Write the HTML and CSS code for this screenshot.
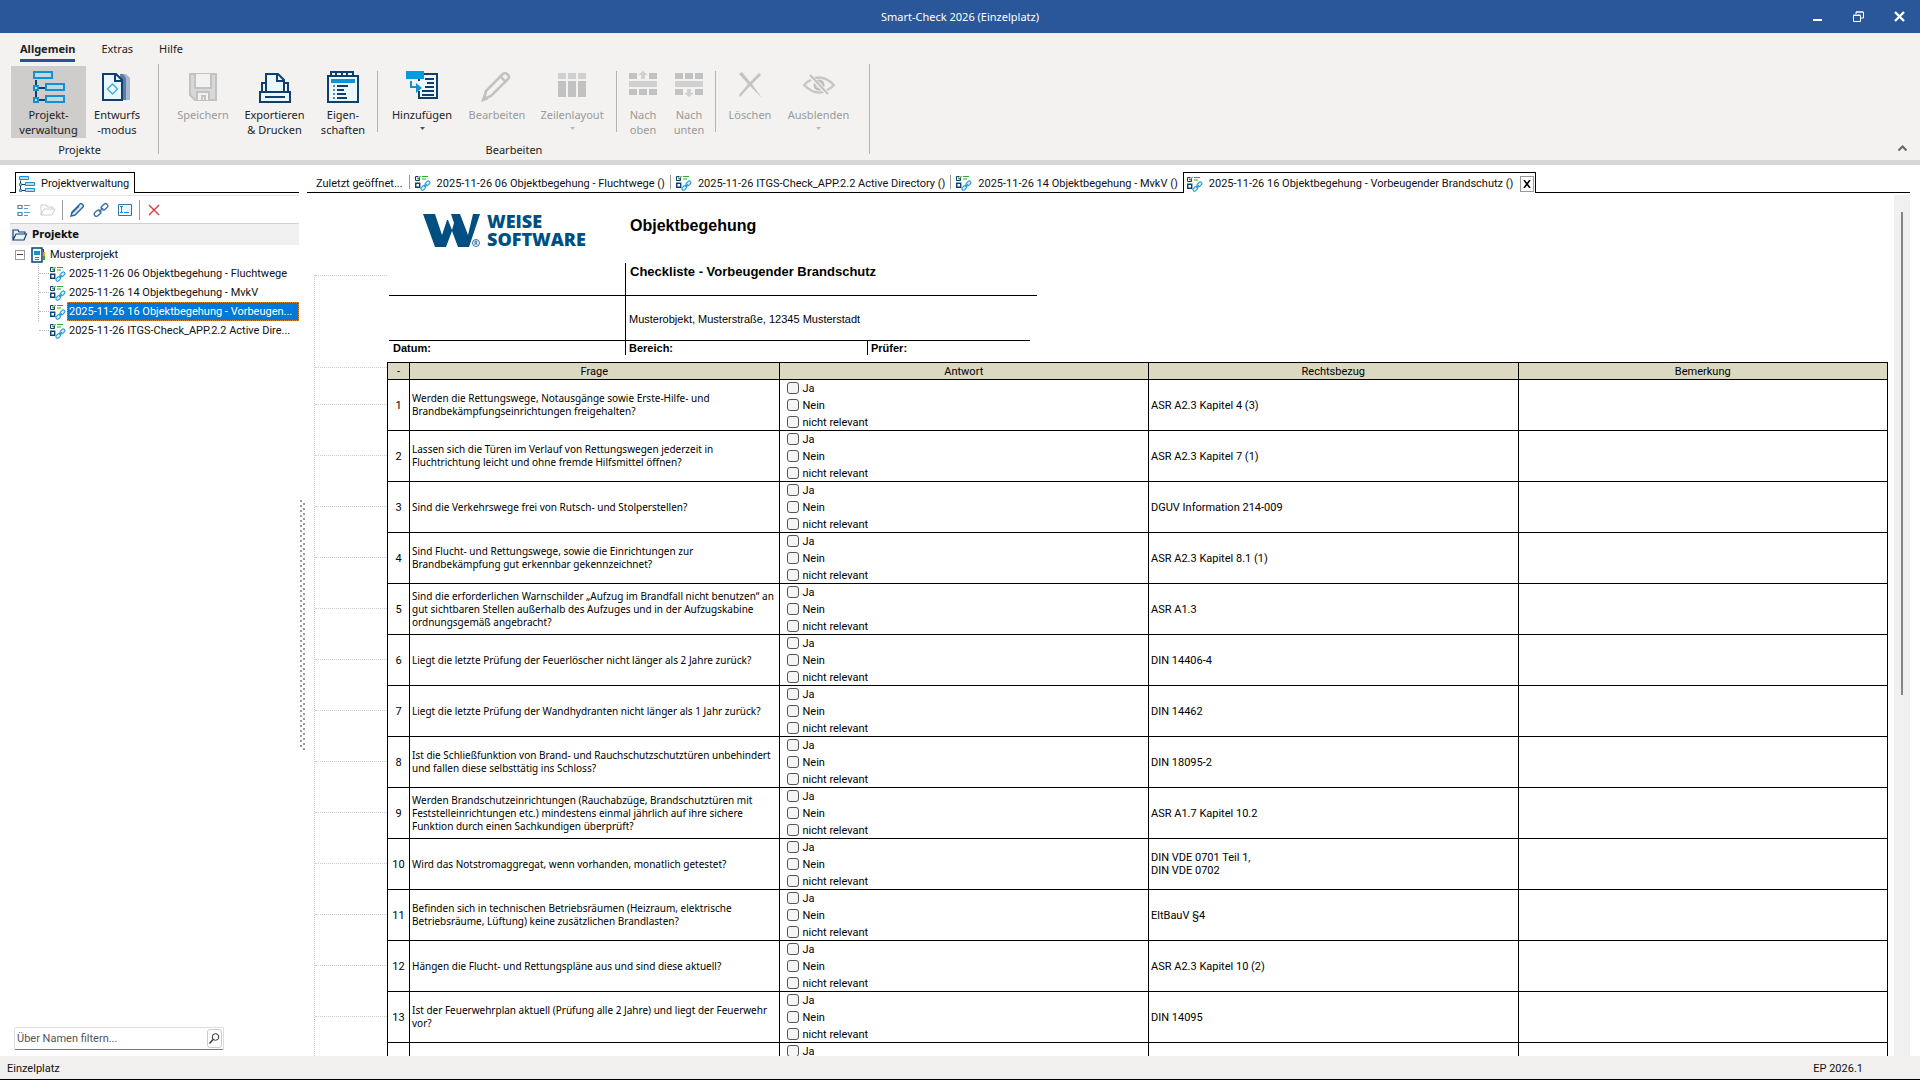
FILE: index.html
```html
<!DOCTYPE html>
<html lang="de">
<head>
<meta charset="utf-8">
<title>Smart-Check 2026 (Einzelplatz)</title>
<link rel="stylesheet" href="styles.css">
</head>
<body>
<svg class="defs" aria-hidden="true">
  <symbol id="i-structure" viewBox="0 0 32 32"><path d="M3 9v17M5 17h7M5 29h7" fill="none" stroke="#0f3f6e" stroke-width="2"/><g fill="#c0d8e4" stroke="#1492cf" stroke-width="2"><path d="M1 1h18v6H1zM13 13h18v6H13zM13 25h18v6H13zM1 15h4v4H1zM1 27h4v4H1z"/></g></symbol>
  <symbol id="i-checklist" viewBox="0 0 16 16"><path d="M3.500 1.500h-3v4h4V3" fill="none" stroke="#0f3f6e"/><path d="M2 2.500l1.200 1.500L5.500 1" fill="none" stroke="#2faa2f" stroke-width="1.200"/><path d="M7 1.500h6M7 4h4" stroke="#2faa2f" stroke-width="1.200"/><path d="M.7 8.200h4v4h-4z" fill="#fff" stroke="#0f3f6e" stroke-width="1.400"/><g fill="#d8effa" stroke="#2a9bd4" stroke-width="1.100"><rect x="9.800" y="6.800" width="5.400" height="3.200" rx="1.500" transform="rotate(-45 12.500 8.400)"/><rect x="5.600" y="11.200" width="5.400" height="3.200" rx="1.500" transform="rotate(-45 8.300 12.800)"/><path d="M9.200 12l2.600-2.800"/></g></symbol>
</svg>

<header class="titlebar">
  <h1 class="titlebar-text">Smart-Check 2026 (Einzelplatz)</h1>
  <div class="window-buttons">
    <button class="window-button" aria-label="Minimieren"><svg width="11" height="11"><path d="M1 8h9v2H1z" fill="#fff"/></svg></button>
    <button class="window-button" aria-label="Wiederherstellen"><svg width="11" height="11"><path d="M.5 4.500h7v6h-7zM3 3V1h7.500v6H8M.5 4h7M3 1h7" fill="none" stroke="#fff"/></svg></button>
    <button class="window-button" aria-label="Schließen"><svg width="11" height="11"><path d="M1 1l9 9M10 1l-9 9" stroke="#fff" stroke-width="2.400"/></svg></button>
  </div>
</header>

<section class="ribbon">
  <nav class="ribbon-tabs">
    <a href="#allgemein" class="ribbon-tab ribbon-tab-active">Allgemein</a>
    <a href="#extras" class="ribbon-tab">Extras</a>
    <a href="#hilfe" class="ribbon-tab">Hilfe</a>
  </nav>
  <div class="ribbon-groups">
    <div class="group group-projects">
      <div class="group-tools">
        <button class="tool tool-w75 tool-pressed"><svg class="icon32"><use href="#i-structure"/></svg><span>Projekt-<br>verwaltung</span></button>
        <button class="tool tool-w62"><svg class="icon32" viewBox="0 0 32 32"><path d="M22 3h3l4 4v22h-7" fill="#a9b7cb"/><path d="M19 3h3l3 4v22h-5" fill="#5d7ba5"/><path d="M2 3h13l6 6v20H2z" fill="#eaf7fc" stroke="#0f3f6e" stroke-width="2"/><path d="M14 3v7h7" fill="none" stroke="#0f3f6e" stroke-width="2"/><path d="M11.500 13l5 5-5 5-5-5z" fill="none" stroke="#43b0e0" stroke-width="1.500"/></svg><span>Entwurfs<br>-modus</span></button>
      </div>
      <div class="group-label">Projekte</div>
    </div>
    <div class="group group-edit">
      <div class="group-tools">
        <button class="tool tool-w68" disabled><svg class="icon32" viewBox="0 0 32 32"><path d="M3 3h26v26H8l-5-5z" fill="#d8d8d8" stroke="#c2c2c2" stroke-width="2"/><path d="M8 3v14h16V3" fill="#f3f2f0" stroke="#c2c2c2" stroke-width="2"/><path d="M10 29v-8h12v8M15 29v-4h3v4" fill="#f3f2f0" stroke="#c2c2c2" stroke-width="2"/></svg><span>Speichern</span></button>
        <button class="tool tool-w75"><svg class="icon32" viewBox="0 0 32 32"><path d="M3 20v-8h4V5M29 20v-8h-4" fill="none" stroke="#0f3f6e" stroke-width="2"/><path d="M7 20V3h12l6 6v11" fill="#eaf7fc" stroke="#0f3f6e" stroke-width="2"/><path d="M18 3v7h7" fill="none" stroke="#0f3f6e" stroke-width="2"/><path d="M1 21h30v10H1z" fill="#eaf7fc" stroke="#0f3f6e" stroke-width="2"/><path d="M6 26h20" stroke="#0f3f6e" stroke-width="2"/></svg><span>Exportieren<br>&amp; Drucken</span></button>
        <button class="tool tool-w62"><svg class="icon32" viewBox="0 0 32 32"><path d="M1 5h30v26H1z" fill="#eaf7fc" stroke="#0f3f6e" stroke-width="2"/><path d="M4 1h22v4M9 1v4M15 1v4M20 1v4M4 0v5" fill="none" stroke="#0f3f6e" stroke-width="2"/><path d="M4 8h24v4H4z" fill="#1492cf"/><path d="M6 14h2v2H6zM6 18h2v2H6zM6 22h2v2H6zM6 26h2v2H6z" fill="#5f87a0"/><path d="M10 15h11M10 19h7M10 23h9M10 27h10" stroke="#0f3f6e" stroke-width="2"/></svg><span>Eigen-<br>schaften</span></button>
        <i class="tool-separator"></i>
        <button class="tool tool-w82"><svg class="icon32" viewBox="0 0 32 32"><path d="M13 10V3h18v24H13v-7" fill="#eaf7fc" stroke="#0f3f6e" stroke-width="2"/><path d="M19 8h9M21 12h7M16 24h12" stroke="#0f3f6e" stroke-width="2"/><path d="M16 20h12M19 16h9" stroke="#0f3f6e" stroke-width="2"/><path d="M0 0h18v8H0z" fill="#009de0"/><path d="M5 10v6h7" fill="none" stroke="#1492cf" stroke-width="2"/><path d="M10 12l6 5-6 5z" fill="#1492cf"/></svg><span>Hinzufügen</span><svg class="arrow" viewBox="0 0 5 3"><path d="M0 0h5L2.500 3z"/></svg></button>
        <button class="tool tool-w68" disabled><svg class="icon32" viewBox="0 0 32 32"><path d="M3 28l2-8L22 3a2.500 2.500 0 0 1 4 0l1 1a2.500 2.500 0 0 1 0 4L10 25z" fill="#f3f2f0" stroke="#c2c2c2" stroke-width="2.600"/><path d="M20 6l5 5M2 29l3-1-2-2z" stroke="#c2c2c2" stroke-width="2.500"/></svg><span>Bearbeiten</span></button>
        <button class="tool tool-w82" disabled><svg class="icon32" viewBox="0 0 32 32"><path d="M2 2h8v6H2zM12 2h8v6h-8zM22 2h8v6h-8z" fill="#d0d0d0"/><path d="M2 10h8v16H2zM12 10h8v16h-8zM22 10h8v16h-8z" fill="#c2c2c2"/></svg><span>Zeilenlayout</span><svg class="arrow" viewBox="0 0 5 3"><path d="M0 0h5L2.500 3z"/></svg></button>
        <i class="tool-separator"></i>
        <button class="tool tool-w46" disabled><svg class="icon32" viewBox="0 0 32 32"><path d="M2 2h8v6H2zM22 2h8v6h-8zM2 18h8v6H2zM12 18h8v6h-8zM22 18h8v6h-8z" fill="#c2c2c2"/><path d="M2 10h28v6H2zM16 0l5 4h-3v4h-4V4h-3z" fill="#d0d0d0"/></svg><span>Nach<br>oben</span></button>
        <button class="tool tool-w46" disabled><svg class="icon32" viewBox="0 0 32 32"><path d="M2 2h8v6H2zM12 2h8v6h-8zM22 2h8v6h-8zM2 18h8v6H2zM22 18h8v6h-8z" fill="#c2c2c2"/><path d="M2 10h28v6H2zM16 26l5-4h-3v-4h-4v4h-3z" fill="#d0d0d0"/></svg><span>Nach<br>unten</span></button>
        <i class="tool-separator"></i>
        <button class="tool tool-w62" disabled><svg class="icon32" viewBox="0 0 32 32"><path d="M5 3l3-2 8 10 9-9 2 2-9 9 10 14-12-12L6 26l-1-2 9-11z" fill="#c4c4c4"/></svg><span>Löschen</span></button>
        <button class="tool tool-w75" disabled><svg class="icon32" viewBox="0 0 32 32"><path d="M1 14q15-15 30 0q-15 15-30 0z" fill="none" stroke="#c6c6c6" stroke-width="2.400"/><circle cx="16" cy="14" r="4.500" fill="#d4d4d4" stroke="#bbb" stroke-width="2"/><path d="M6 4l20 20" stroke="#f3f2f0" stroke-width="4"/><path d="M7 4l18 19" stroke="#c2c2c2" stroke-width="2"/></svg><span>Ausblenden</span><svg class="arrow" viewBox="0 0 5 3"><path d="M0 0h5L2.500 3z"/></svg></button>
      </div>
      <div class="group-label">Bearbeiten</div>
    </div>
    <button class="ribbon-collapse" aria-label="Menüband reduzieren"><svg width="9" height="6"><path d="M.5 5.500l4-4 4 4" fill="none" stroke="#666" stroke-width="2"/></svg></button>
  </div>
</section>

<main class="workspace">
  <aside class="sidebar">
    <div class="tabstrip">
      <i class="strip-lead"></i>
      <a href="#projektverwaltung" class="tab tab-active"><svg class="icon16"><use href="#i-structure"/></svg>Projektverwaltung</a>
      <i class="strip-rest"></i>
    </div>
    <div class="side-tools">
      <button aria-label="Neue Checkliste"><svg width="14" height="14" viewBox="0 0 14 14"><path d="M1 2.500h4v3H1zM1 9.500h4v3H1z" fill="none" stroke="#4a86b0" stroke-width="1.200"/><path d="M7 2.500h6M7 5.500h4M7 9.500h6M7 12.500h4" stroke="#5aa0c8"/></svg></button>
      <button aria-label="Neuer Ordner" disabled><svg width="16" height="14" viewBox="0 0 16 14"><path d="M1 12V2h5l1 2h6v2M1 12h11l3-6H4z" fill="none" stroke="#ccc"/></svg></button>
      <i class="side-separator"></i>
      <button aria-label="Bearbeiten"><svg width="16" height="16" viewBox="0 0 16 16"><path d="M2 14l1-4 8-8q1-1 2 0l1 1q1 1 0 2l-8 8z" fill="#dce9f2" stroke="#2f6699" stroke-width="1.400"/><path d="M3 11l7-7" stroke="#2f6699" stroke-width="1.500"/></svg></button>
      <button aria-label="Verknüpfen"><svg width="16" height="16" viewBox="0 0 16 16"><g fill="none" stroke="#3d71a3" stroke-width="1.400"><rect x="8" y="2.600" width="7" height="4.400" rx="2" transform="rotate(-42 11.500 4.800)"/><rect x="1" y="9" width="7" height="4.400" rx="2" transform="rotate(-42 4.500 11.200)"/><path d="M6 10l4-4"/></g></svg></button>
      <button aria-label="Umbenennen"><svg width="14" height="12" viewBox="0 0 14 12"><path d="M.5.5h13v11H.5z" fill="#eef7fc" stroke="#3d71a3"/><path d="M2 2.500h3M2 8.500h3M3.500 2.500v6M6 8.500h5" stroke="#1e8ac4"/></svg></button>
      <i class="side-separator"></i>
      <button aria-label="Löschen"><svg width="12" height="12" viewBox="0 0 12 12"><path d="M1 1l10 10M11 1L1 11" stroke="#d43c3c" stroke-width="1.400"/></svg></button>
    </div>
    <div class="tree-head"><svg width="16" height="12" viewBox="0 0 16 12"><path d="M1 11V1h5l1 2h6v2M1 11h11l2.500-6H4z" fill="#e4f3fb" stroke="#0f3f6e" stroke-width="1.200"/></svg>Projekte</div>
    <div class="tree-root"><button class="tree-toggle" aria-label="Zuklappen"></button><svg width="14" height="16" viewBox="0 0 14 16"><path d="M1 1h10v14H1z" fill="#eaf7fc" stroke="#0f3f6e" stroke-width="1.500"/><path d="M3 4h6v4H3zM4 10h4v1H4zM4 12h4v1H4z" fill="#1492cf"/><path d="M12 2h1v3h-1z" fill="#0f3f6e"/><path d="M12 5h2v4h-2z" fill="#f0a000"/><path d="M12 9h2v4h-2z" fill="#2faa2f"/></svg>Musterprojekt</div>
    <ul class="tree">
      <li><svg class="icon16"><use href="#i-checklist"/></svg><a href="#c06">2025-11-26 06 Objektbegehung - Fluchtwege</a></li>
      <li><svg class="icon16"><use href="#i-checklist"/></svg><a href="#c14">2025-11-26 14 Objektbegehung - MvkV</a></li>
      <li><svg class="icon16"><use href="#i-checklist"/></svg><a href="#c16" class="selected">2025-11-26 16 Objektbegehung - Vorbeugen...</a></li>
      <li><svg class="icon16"><use href="#i-checklist"/></svg><a href="#itgs">2025-11-26 ITGS-Check_APP.2.2 Active Dire...</a></li>
    </ul>
    <form class="filter">
      <input type="text" placeholder="Über Namen filtern..." aria-label="Über Namen filtern">
      <button type="button" aria-label="Suchen"><svg width="11" height="11" viewBox="0 0 11 11"><circle cx="6.500" cy="4" r="3.300" fill="none" stroke="#333"/><path d="M4 6.500L.5 10.500" stroke="#333" stroke-width="1.300"/></svg></button>
    </form>
  </aside>
  <div class="splitter"><i></i></div>
  <section class="document">
    <nav class="tabstrip">
      <a href="#recent" class="tab tab-recent">Zuletzt geöffnet...</a><i class="tab-separator"></i>
      <a href="#c06" class="tab"><svg class="icon16"><use href="#i-checklist"/></svg>2025-11-26 06 Objektbegehung - Fluchtwege ()</a><i class="tab-separator"></i>
      <a href="#itgs" class="tab"><svg class="icon16"><use href="#i-checklist"/></svg>2025-11-26 ITGS-Check_APP.2.2 Active Directory ()</a><i class="tab-separator"></i>
      <a href="#c14" class="tab"><svg class="icon16"><use href="#i-checklist"/></svg>2025-11-26 14 Objektbegehung - MvkV ()</a>
      <div class="tab tab-active"><svg class="icon16"><use href="#i-checklist"/></svg>2025-11-26 16 Objektbegehung - Vorbeugender Brandschutz ()<button class="tab-close" aria-label="Schließen"><svg width="8" height="8"><path d="M1 0l6 8M7 0L1 8" stroke="#000" stroke-width="1.600"/></svg></button></div>
      <i class="strip-rest"></i>
    </nav>
    <div class="page-area">
      <div class="gutter"><i class="g-head"></i><i class="g-first"></i><i></i><i></i><i></i><i></i><i></i><i></i><i></i><i></i><i></i><i></i><i></i><i></i><i></i></div>
      <div class="sheet">
        <div class="form-head">
          <div class="row-title">
            <div class="logo">
              <svg width="57" height="34" viewBox="0 0 57 34"><path d="M0 0h12l7 21 5-15h1l4 10 2-7-3-9h9l8 21L50 0h7L46 33H35l-6-16-6 16H12z" fill="#004f80"/><circle cx="53" cy="29" r="3.500" fill="none" stroke="#004f80" stroke-width=".8"/><path d="M52 31v-4h1.500q1 1 0 2H52m1.200 0l1 2" fill="none" stroke="#004f80" stroke-width=".7"/></svg>
              <span>WEISE<br>SOFTWARE</span>
            </div>
            <h2>Objektbegehung</h2>
          </div>
          <div class="row-check"><div></div><h3>Checkliste - Vorbeugender Brandschutz</h3></div>
          <div class="row-object"><div></div><p>Musterobjekt, Musterstraße, 12345 Musterstadt</p></div>
          <div class="row-meta"><b>Datum:</b><b>Bereich:</b><b>Prüfer:</b></div>
        </div>
        <table class="checklist">
          <colgroup><col class="col-no"><col><col><col><col></colgroup>
          <thead><tr><th>-</th><th>Frage</th><th>Antwort</th><th>Rechtsbezug</th><th>Bemerkung</th></tr></thead>
          <tbody>
            <tr><td>1</td><td class="question">Werden die Rettungswege, Notausgänge sowie Erste-Hilfe- und<br>Brandbekämpfungseinrichtungen freigehalten?</td><td><div class="answers"><label><input type="checkbox">Ja</label><label><input type="checkbox">Nein</label><label><input type="checkbox">nicht relevant</label></div></td><td>ASR A2.3 Kapitel 4 (3)</td><td></td></tr>
            <tr><td>2</td><td class="question">Lassen sich die Türen im Verlauf von Rettungswegen jederzeit in<br>Fluchtrichtung leicht und ohne fremde Hilfsmittel öffnen?</td><td><div class="answers"><label><input type="checkbox">Ja</label><label><input type="checkbox">Nein</label><label><input type="checkbox">nicht relevant</label></div></td><td>ASR A2.3 Kapitel 7 (1)</td><td></td></tr>
            <tr><td>3</td><td class="question">Sind die Verkehrswege frei von Rutsch- und Stolperstellen?</td><td><div class="answers"><label><input type="checkbox">Ja</label><label><input type="checkbox">Nein</label><label><input type="checkbox">nicht relevant</label></div></td><td>DGUV Information 214-009</td><td></td></tr>
            <tr><td>4</td><td class="question">Sind Flucht- und Rettungswege, sowie die Einrichtungen zur<br>Brandbekämpfung gut erkennbar gekennzeichnet?</td><td><div class="answers"><label><input type="checkbox">Ja</label><label><input type="checkbox">Nein</label><label><input type="checkbox">nicht relevant</label></div></td><td>ASR A2.3 Kapitel 8.1 (1)</td><td></td></tr>
            <tr><td>5</td><td class="question">Sind die erforderlichen Warnschilder „Aufzug im Brandfall nicht benutzen“ an<br>gut sichtbaren Stellen außerhalb des Aufzuges und in der Aufzugskabine<br>ordnungsgemäß angebracht?</td><td><div class="answers"><label><input type="checkbox">Ja</label><label><input type="checkbox">Nein</label><label><input type="checkbox">nicht relevant</label></div></td><td>ASR A1.3</td><td></td></tr>
            <tr><td>6</td><td class="question">Liegt die letzte Prüfung der Feuerlöscher nicht länger als 2 Jahre zurück?</td><td><div class="answers"><label><input type="checkbox">Ja</label><label><input type="checkbox">Nein</label><label><input type="checkbox">nicht relevant</label></div></td><td>DIN 14406-4</td><td></td></tr>
            <tr><td>7</td><td class="question">Liegt die letzte Prüfung der Wandhydranten nicht länger als 1 Jahr zurück?</td><td><div class="answers"><label><input type="checkbox">Ja</label><label><input type="checkbox">Nein</label><label><input type="checkbox">nicht relevant</label></div></td><td>DIN 14462</td><td></td></tr>
            <tr><td>8</td><td class="question">Ist die Schließfunktion von Brand- und Rauchschutzschutztüren unbehindert<br>und fallen diese selbsttätig ins Schloss?</td><td><div class="answers"><label><input type="checkbox">Ja</label><label><input type="checkbox">Nein</label><label><input type="checkbox">nicht relevant</label></div></td><td>DIN 18095-2</td><td></td></tr>
            <tr><td>9</td><td class="question">Werden Brandschutzeinrichtungen (Rauchabzüge, Brandschutztüren mit<br>Feststelleinrichtungen etc.) mindestens einmal jährlich auf ihre sichere<br>Funktion durch einen Sachkundigen überprüft?</td><td><div class="answers"><label><input type="checkbox">Ja</label><label><input type="checkbox">Nein</label><label><input type="checkbox">nicht relevant</label></div></td><td>ASR A1.7 Kapitel 10.2</td><td></td></tr>
            <tr><td>10</td><td class="question">Wird das Notstromaggregat, wenn vorhanden, monatlich getestet?</td><td><div class="answers"><label><input type="checkbox">Ja</label><label><input type="checkbox">Nein</label><label><input type="checkbox">nicht relevant</label></div></td><td>DIN VDE 0701 Teil 1,<br>DIN VDE 0702</td><td></td></tr>
            <tr><td>11</td><td class="question">Befinden sich in technischen Betriebsräumen (Heizraum, elektrische<br>Betriebsräume, Lüftung) keine zusätzlichen Brandlasten?</td><td><div class="answers"><label><input type="checkbox">Ja</label><label><input type="checkbox">Nein</label><label><input type="checkbox">nicht relevant</label></div></td><td>EltBauV §4</td><td></td></tr>
            <tr><td>12</td><td class="question">Hängen die Flucht- und Rettungspläne aus und sind diese aktuell?</td><td><div class="answers"><label><input type="checkbox">Ja</label><label><input type="checkbox">Nein</label><label><input type="checkbox">nicht relevant</label></div></td><td>ASR A2.3 Kapitel 10 (2)</td><td></td></tr>
            <tr><td>13</td><td class="question">Ist der Feuerwehrplan aktuell (Prüfung alle 2 Jahre) und liegt der Feuerwehr<br>vor?</td><td><div class="answers"><label><input type="checkbox">Ja</label><label><input type="checkbox">Nein</label><label><input type="checkbox">nicht relevant</label></div></td><td>DIN 14095</td><td></td></tr>
            <tr><td></td><td></td><td><div class="answers"><label><input type="checkbox">Ja</label></div></td><td></td><td></td></tr>
          </tbody>
        </table>
      </div>
      <div class="scrollbar"><i></i></div>
    </div>
  </section>
</main>

<footer class="statusbar"><span>Einzelplatz</span><span>EP 2026.1</span></footer>
</body>
</html>
```
FILE: styles.css
```css
* { box-sizing: border-box; }

body {
  margin: 0;
  height: 100vh;
  display: flex;
  flex-direction: column;
  overflow: hidden;
  background: #fff;
  color: #111;
  font: 11px/13px Roboto, "Noto Sans", sans-serif;
}

a { color: inherit; text-decoration: none; }
button { border: 0; padding: 0; background: none; color: inherit; font: inherit; }
i { display: block; }
svg { display: block; flex: none; }
h1, h2, h3, p, ul { margin: 0; padding: 0; }

.defs { position: absolute; width: 0; height: 0; }
.icon32 { width: 32px; height: 32px; }
.icon16 { width: 16px; height: 16px; }

/* Title bar */
.titlebar {
  flex: none;
  height: 33px;
  display: grid;
  grid-template-columns: 1fr auto 1fr;
  align-items: center;
  background: #2a579a;
  color: #fff;
}
.titlebar-text { grid-column: 2; font: 11px/16px "Noto Sans", sans-serif; }
.window-buttons { display: flex; justify-content: flex-end; }
.window-button { width: 41px; height: 33px; display: grid; place-items: center; }

/* Ribbon */
.ribbon {
  flex: none;
  height: 132px;
  display: flex;
  flex-direction: column;
  background: #f3f2f0;
  border-bottom: 5px solid #d6d6d6;
  font: 11px/15px "Noto Sans", sans-serif;
  color: #222;
}
.ribbon-tabs { display: flex; gap: 26px; padding-left: 20px; }
.ribbon-tab { height: 29px; padding-top: 8px; border-bottom: 3px solid transparent; }
.ribbon-tab-active { font-weight: bold; border-color: #2b4f92; }
.ribbon-groups { display: flex; align-items: flex-start; padding: 2px 0 0 11px; }
.group { height: 90px; padding-top: 2px; border-right: 1px solid #b4b4b4; }
.group-projects { width: 148px; }
.group-edit { width: 711px; padding-left: 10px; }
.group-tools { display: flex; }
.group-label { padding: 4px 10px 0 0; text-align: center; }
.tool {
  height: 72px;
  padding-top: 5px;
  display: flex;
  flex-direction: column;
  align-items: center;
  text-align: center;
}
.tool span { margin-top: 4px; }
.tool-w46 { width: 46px; }
.tool-w62 { width: 62px; }
.tool-w68 { width: 68px; }
.tool-w75 { width: 75px; }
.tool-w82 { width: 82px; }
.tool-pressed { background: #cecdcb; }
.tool:disabled { color: #999; }
.arrow { width: 5px; height: 3px; margin-top: 5px; fill: #555; }
.tool:disabled .arrow { fill: #bbb; }
.tool-separator { width: 1px; height: 61px; margin: 5px 3px 0; background: #b4b4b4; }
.ribbon-collapse { margin: 81px 13px 0 auto; }

/* Work area */
.workspace { flex: 1; min-height: 0; display: flex; padding: 0 10px; }

.tabstrip { flex: none; height: 28px; display: flex; align-items: flex-end; }
.tab {
  height: 21px;
  padding: 2px 5px 0;
  display: flex;
  align-items: center;
  gap: 6px;
  border-bottom: 1px solid #000;
  white-space: nowrap;
}
.tab-recent { padding: 2px 6px 0 9px; }
.tab-active { padding: 1px 5px 0 3px; border: 1px solid #000; border-bottom: 0; }
.tab-separator { width: 1px; height: 21px; border-bottom: 1px solid #000; background: linear-gradient(transparent 3px, #999 3px, #999 17px, transparent 17px); }
.strip-lead { width: 5px; border-bottom: 1px solid #000; }
.strip-rest { flex: 1; border-bottom: 1px solid #000; }
.tab-close { width: 14px; height: 16px; margin: 0 -4px 0 1px; display: grid; place-items: center; border: 1px solid #999; }

.sidebar { width: 289px; flex: none; display: flex; flex-direction: column; }
.side-tools {
  height: 29px;
  margin-top: 2px;
  padding: 0 0 0 2px;
  display: flex;
  align-items: center;
  border-top: 1px solid #e6e6e6;
  border-bottom: 1px solid #d0d0d0;
}
.side-tools button { width: 24px; display: grid; place-items: center; }
.side-separator { width: 1px; height: 20px; margin: 0 2px; background: #999; }
.tree-head {
  height: 21px;
  padding-left: 2px;
  display: flex;
  align-items: center;
  gap: 4px;
  background: #f0f0f0;
  font: bold 11px/13px "DejaVu Sans Condensed", sans-serif;
}
.tree-root { height: 19px; padding-left: 5px; display: flex; align-items: center; gap: 5px; }
.tree-toggle {
  width: 10px;
  height: 10px;
  margin-right: 1px;
  border: 1px solid #999;
  background: linear-gradient(#445, #445) center / 6px 1px no-repeat;
}
.tree { flex: 1; padding-left: 28px; list-style: none; }
.tree li { height: 19px; display: flex; align-items: center; border-left: 1px dotted #bbb; }
.tree li:last-child { border-color: transparent; }
.tree li::before { content: ""; width: 10px; height: 9px; margin-right: 1px; align-self: flex-start; border-bottom: 1px dotted #bbb; }
.tree a { flex: 1; height: 19px; margin-left: 1px; padding: 3px 2px; white-space: nowrap; }
.tree .selected { background: #0078d7; color: #fff; outline: 1px dotted #e08728; outline-offset: -1px; }

.filter {
  width: 210px;
  height: 23px;
  margin: 0 0 6px 4px;
  padding-right: 1px;
  display: flex;
  align-items: center;
  border: 1px solid #ddd;
  border-bottom-color: #777;
  border-radius: 2px;
}
.filter input { flex: 1; min-width: 0; border: 0; padding: 0 2px; outline: 0; background: none; font: inherit; }
.filter input::placeholder { color: #555; opacity: 1; }
.filter button { width: 15px; height: 19px; display: grid; place-items: center; border: 1px solid #ccc; border-radius: 3px; }

.splitter { width: 8px; flex: none; padding-top: 28px; display: flex; align-items: center; }
.splitter i {
  width: 6px;
  height: 250px;
  margin-left: 1px;
  background:
    linear-gradient(#999 2px, transparent 2px) 0 0 / 2px 5px repeat-y,
    linear-gradient(#999 2px, transparent 2px) 3px 3px / 2px 5px repeat-y;
}

/* Document */
.document { flex: 1; min-width: 0; display: flex; flex-direction: column; }
.page-area { flex: 1; min-height: 0; margin-top: 2px; padding-left: 7px; display: flex; overflow: hidden; }
.gutter { width: 73px; flex: none; margin-top: 80px; border-left: 1px dotted #ccc; }
.gutter i { height: 51px; border-top: 1px dotted #ccc; }
.gutter .g-head { height: 92px; }
.gutter .g-first { height: 37px; }
.sheet { flex: 1; min-width: 0; }
.scrollbar { width: 16px; flex: none; margin-left: 6px; padding: 17px 0 0 7px; background: #f0f0f0; }
.scrollbar i { width: 2px; height: 483px; background: #858585; }

.form-head { height: 167px; padding-left: 2px; font-family: "Liberation Sans", sans-serif; color: #000; }
.row-title, .row-check, .row-object { display: grid; grid-template-columns: 236px auto; }
.row-title { height: 68px; }
.row-title h2 { padding: 21px 5px 0; font-size: 16px; line-height: 20px; }
.row-check { width: 648px; height: 33px; border-bottom: 1px solid #000; }
.row-check h3 { padding: 0 4px; border-left: 1px solid #000; font-size: 13px; line-height: 18px; }
.row-object { width: 641px; height: 45px; border-bottom: 1px solid #000; }
.row-object p { padding: 17px 3px 0; border-left: 1px solid #000; }
.row-meta { height: 14px; display: grid; grid-template-columns: 236px 242px auto; line-height: 14px; }
.row-meta b { padding-left: 4px; }
.row-meta b + b { padding-left: 3px; border-left: 1px solid #000; }

.logo { padding: 19px 0 0 34px; display: flex; gap: 7px; color: #004f80; font: 800 18px/18px "Open Sans", sans-serif; }
.logo span { margin-top: -2px; }

.checklist { width: 100%; table-layout: fixed; border-collapse: collapse; color: #000; }
.col-no { width: 22px; }
.checklist th, .checklist td { padding: 0 2px; border: 1px solid #000; }
.checklist th { height: 17px; background: #dbd9c2; font-weight: normal; }
.checklist td { height: 51px; white-space: nowrap; }
.checklist td:first-child { text-align: center; padding: 0; }
.checklist .question { font: 10px/13px "Noto Sans", sans-serif; }
.answers { height: 50px; padding-left: 5px; display: flex; flex-direction: column; gap: 1px; }
.answers label { height: 16px; display: flex; align-items: center; gap: 4px; }
.answers input { appearance: none; width: 12px; height: 12px; margin: 0; border: 1px solid #555; border-radius: 3px; background: #f5f5f5; }

/* Status bar */
.statusbar {
  flex: none;
  height: 24px;
  padding: 1px 57px 0 7px;
  display: flex;
  justify-content: space-between;
  align-items: center;
  background: #f2f0ef;
  border-bottom: 1px solid #000;
}
```
